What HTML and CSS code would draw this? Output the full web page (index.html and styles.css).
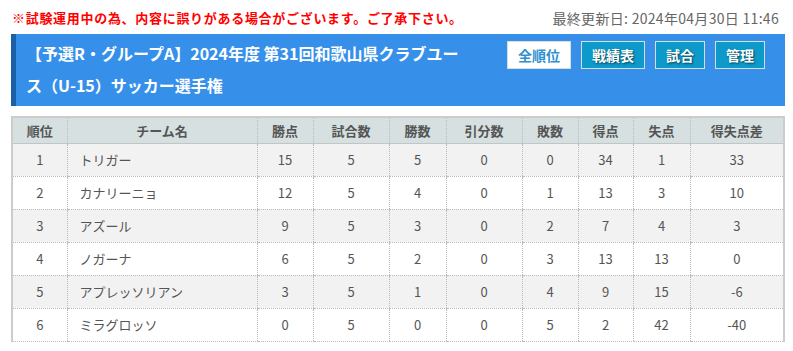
FILE: index.html
```html
<!DOCTYPE html>
<html lang="ja">
<head>
<meta charset="utf-8">
<link rel="stylesheet" href="styles.css">
</head>
<body>
<div class="page">
  <div class="topbar">
    <span class="notice">※試験運用中の為、内容に誤りがある場合がございます。ご了承下さい。</span>
    <span class="updated">最終更新日: 2024年04月30日 11:46</span>
  </div>
  <div class="titlebox">
    <h1 class="title">【予選R・グループA】2024年度 第31回和歌山県クラブユース（U-15）サッカー選手権</h1>
    <div class="btns">
      <a class="btn btn-active">全順位</a>
      <a class="btn">戦績表</a>
      <a class="btn">試合</a>
      <a class="btn">管理</a>
    </div>
  </div>
  <table class="standings">
    <colgroup>
      <col style="width:55px"><col style="width:190px"><col style="width:56px"><col style="width:76px"><col style="width:57px"><col style="width:76px"><col style="width:56px"><col style="width:55px"><col style="width:57px"><col>
    </colgroup>
    <thead>
      <tr><th>順位</th><th>チーム名</th><th>勝点</th><th>試合数</th><th>勝数</th><th>引分数</th><th>敗数</th><th>得点</th><th>失点</th><th>得失点差</th></tr>
    </thead>
    <tbody>
      <tr><td>1</td><td class="name">トリガー</td><td>15</td><td>5</td><td>5</td><td>0</td><td>0</td><td>34</td><td>1</td><td>33</td></tr>
      <tr><td>2</td><td class="name">カナリーニョ</td><td>12</td><td>5</td><td>4</td><td>0</td><td>1</td><td>13</td><td>3</td><td>10</td></tr>
      <tr><td>3</td><td class="name">アズール</td><td>9</td><td>5</td><td>3</td><td>0</td><td>2</td><td>7</td><td>4</td><td>3</td></tr>
      <tr><td>4</td><td class="name">ノガーナ</td><td>6</td><td>5</td><td>2</td><td>0</td><td>3</td><td>13</td><td>13</td><td>0</td></tr>
      <tr><td>5</td><td class="name">アプレッソリアン</td><td>3</td><td>5</td><td>1</td><td>0</td><td>4</td><td>9</td><td>15</td><td>-6</td></tr>
      <tr><td>6</td><td class="name">ミラグロッソ</td><td>0</td><td>5</td><td>0</td><td>0</td><td>5</td><td>2</td><td>42</td><td>-40</td></tr>
    </tbody>
  </table>
</div>
</body>
</html>
```

FILE: styles.css
```css
* { box-sizing: border-box; }
html, body { margin: 0; padding: 0; background: #fff; }
body {
  font-family: "Noto Sans CJK JP", "Noto Sans", sans-serif;
  color: #555;
}
.page { padding: 0 8px 0 11px; }
.topbar {
  height: 34px;
  display: flex;
  justify-content: space-between;
  align-items: flex-start;
  padding: 8px 6px 0 1px;
  line-height: 20px;
}
.notice {
  color: #ff0000;
  font-size: 13px;
  font-weight: 700;
  letter-spacing: 0.7px;
}
.updated {
  color: #666;
  font-size: 14px;
  letter-spacing: 0.3px;
}
.titlebox {
  background: #3690ea;
  border-left: 5px solid #1a5faa;
  display: flex;
  justify-content: space-between;
  align-items: flex-start;
  padding: 3px 20px 5px 10px;
  height: 72px;
}
.title {
  margin: 0;
  width: 445px;
  color: #fff;
  font-size: 16px;
  font-weight: 700;
  line-height: 32px;
}
.btns {
  display: flex;
  gap: 10px;
  margin-top: 4px;
}
.btn {
  display: block;
  height: 28px;
  line-height: 26px;
  padding: 0 10px;
  background: #0d9acb;
  border: 1px solid #d8dde0;
  color: #fff;
  font-size: 14px;
  font-weight: 700;
  text-shadow: 1px 1px 2px rgba(0,0,0,0.6);
}
.btn-active {
  background: #fff;
  color: #2f8fd0;
  text-shadow: none;
}
.standings {
  margin-top: 10px;
  width: 774px;
  table-layout: fixed;
  border-collapse: collapse;
  border-top: 2px solid #ccc;
  border-left: 2px solid #ccc;
  border-right: 2px solid #ccc;
  border-bottom: 1px dotted #bbb;
  font-size: 13px;
}
.standings th {
  background: #d6e0e0;
  color: #555;
  font-weight: 700;
  height: 26px;
  border-left: 1px dotted #bbb;
  border-bottom: 1px solid #c4c4c4;
  text-align: center;
  padding: 0;
}
.standings td {
  height: 33px;
  text-align: center;
  border-left: 1px dotted #bbb;
  border-bottom: 1px dotted #bbb;
  padding: 0;
  color: #555;
}
.standings td.name {
  text-align: left;
  padding-left: 12px;
}
.standings tbody tr:nth-child(odd) td { background: #f2f2f2; }
.standings tbody tr:nth-child(even) td { background: #fff; }
```
